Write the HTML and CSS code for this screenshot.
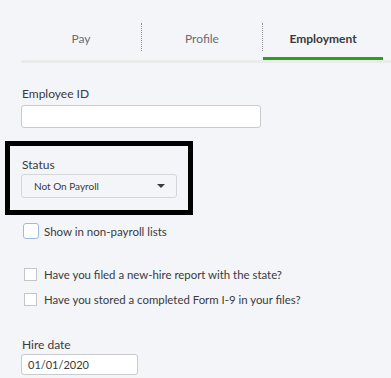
FILE: index.html
```html
<!DOCTYPE html>
<html lang="en">
<head>
  <meta charset="UTF-8">
  <title>Employee - Employment</title>
  <link rel="stylesheet" href="styles.css">
</head>
<body>
  <!-- Tabs -->
  <nav class="tabs">
    <div class="tab">Pay</div>
    <span class="tab-divider"></span>
    <div class="tab">Profile</div>
    <span class="tab-divider"></span>
    <div class="tab active">Employment</div>
  </nav>

  <form class="employment-form">
    <label class="field-label" for="empId">Employee ID</label>
    <input class="text-input emp-id" type="text" id="empId">

    <!-- Highlighted status block -->
    <div class="status-box">
      <label class="field-label" for="status">Status</label>
      <div class="select">
        <span>Not On Payroll</span>
        <span class="caret"></span>
      </div>
    </div>

    <label class="check-row check-big">
      <span class="box"></span>
      <span>Show in non-payroll lists</span>
    </label>

    <div class="questions">
      <label class="check-row">
        <span class="box"></span>
        <span>Have you filed a new-hire report with the state?</span>
      </label>
      <label class="check-row">
        <span class="box"></span>
        <span>Have you stored a completed Form I-9 in your files?</span>
      </label>
    </div>

    <label class="field-label hire-label" for="hireDate">Hire date</label>
    <div class="text-input hire-date">01/01/2020</div>
  </form>
</body>
</html>
```

FILE: styles.css
```css
/* Employment tab of the employee editor */
body {
  margin: 0;
  padding: 0;
  background-color: #f4f5f8;
  font-family: Lato, "Open Sans", sans-serif;
  color: #393a3d;
}
.tabs {
  display: flex;
  margin: 20px 0 0 21px;
  border-bottom: 3px solid #ebebeb;
}
.tab {
  width: 120px;
  height: 37px;
  display: flex;
  align-items: center;
  justify-content: center;
  font-size: 12px;
  color: #6b6c72;
  border-bottom: 3px solid transparent;
}
.tab.active {
  color: #393a3d;
  font-weight: bold;
  border-bottom-color: #2ca01c;
}
.tab-divider {
  width: 0;
  height: 28px;
  margin-top: 3px;
  border-left: 1px dotted #8d9096;
}
.employment-form {
  padding: 23px 0 0 21px;
}
.field-label {
  display: block;
  font-size: 12px;
  line-height: 16px;
  margin: 0 0 3px 1px;
}
.text-input {
  box-sizing: border-box;
  background: white;
  border: 1px solid #c9cacd;
  border-radius: 3px;
  font-family: inherit;
}
.emp-id {
  display: block;
  width: 240px;
  height: 23px;
  margin: 0;
}
.status-box {
  box-sizing: border-box;
  width: 188px;
  margin: 13px 0 0 -16px;
  border: 5px solid black;
  padding: 11px 11px 12px 11px;
}
.status-box .field-label {
  margin-bottom: 1px;
}
.select {
  display: flex;
  align-items: center;
  justify-content: space-between;
  height: 24px;
  box-sizing: border-box;
  padding: 0 11px 0 12px;
  background: #f4f5f8;
  border: 1px solid #d4d5d8;
  border-radius: 3px;
  font-size: 10px;
}
.caret {
  width: 0;
  height: 0;
  border-left: 4px solid transparent;
  border-right: 4px solid transparent;
  border-top: 4px solid #393a3d;
}
.check-row {
  display: flex;
  align-items: center;
  gap: 7px;
  height: 14px;
  font-size: 11.4px;
  margin-left: 3px;
}
.check-row .box {
  box-sizing: border-box;
  width: 13px;
  height: 13px;
  background: white;
  border: 1px solid #c4c5c8;
}
.check-big {
  height: 16px;
  margin: 8px 0 0 2px;
  gap: 5px;
  font-size: 11.5px;
}
.check-big .box {
  width: 16px;
  height: 16px;
  border: 1px solid #9cb9e4;
  border-radius: 3px;
}
.questions {
  display: flex;
  flex-direction: column;
  gap: 11px;
  margin: 28px 0 31px;
}
.hire-label {
  margin-bottom: 1px;
}
.hire-date {
  width: 117px;
  height: 21px;
  font-size: 11px;
  line-height: 19px;
  padding-left: 6px;
}
```
